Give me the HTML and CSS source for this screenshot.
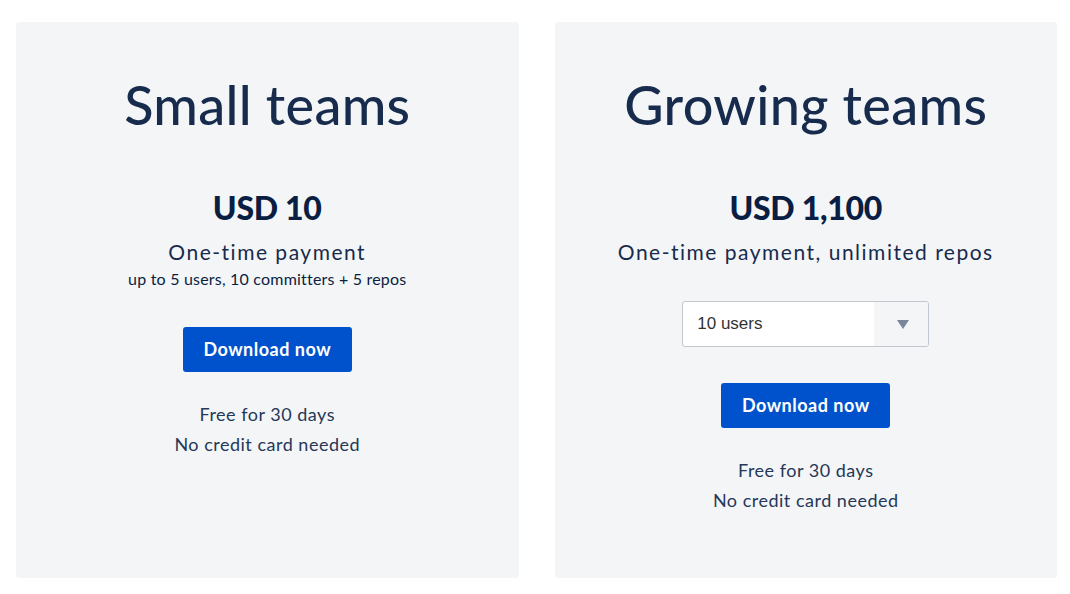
FILE: index.html
```html
<!DOCTYPE html>
<html lang="en">
<head>
    <meta charset="UTF-8">
    <meta name="viewport" content="width=device-width, initial-scale=1.0">
    <title>Pricing</title>
    <link rel="stylesheet" href="styles.css">
</head>
<body>
    <div class="plans">
        <div class="plan">
            <h2 class="plan-title">Small teams</h2>
            <p class="plan-price">USD 10</p>
            <p class="plan-type">One-time payment</p>
            <p class="plan-note">up to 5 users, 10 committers + 5 repos</p>
            <a href="#" class="btn">Download now</a>
            <div class="plan-trial">
                <p>Free for 30 days</p>
                <p>No credit card needed</p>
            </div>
        </div>
        <div class="plan">
            <h2 class="plan-title">Growing teams</h2>
            <p class="plan-price">USD 1,100</p>
            <p class="plan-type">One-time payment, unlimited repos</p>
            <div class="select-box">
                <span class="select-value">10 users</span>
                <span class="select-arrow"><span class="triangle"></span></span>
            </div>
            <a href="#" class="btn">Download now</a>
            <div class="plan-trial">
                <p>Free for 30 days</p>
                <p>No credit card needed</p>
            </div>
        </div>
    </div>
</body>
</html>
```

FILE: styles.css
```css
body {
    font-family: Lato, "Noto Sans", sans-serif;
    margin: 0;
    padding: 0;
    background-color: #fff;
    color: #172b4d;
}
p {
    margin: 0;
}
.plans {
    display: flex;
    gap: 36px;
    padding: 22px 13px 0 16px;
}
.plan {
    flex: 1;
    height: 556px;
    background: #f4f5f7;
    border-radius: 3px;
    display: flex;
    flex-direction: column;
    align-items: center;
    text-align: center;
    padding-top: 53px;
    box-sizing: border-box;
}
.plan-title {
    margin: 0;
    font-size: 54px;
    line-height: 60px;
    font-weight: 500;
    color: #172b4d;
    letter-spacing: 0.3px;
}
.plan-price {
    margin-top: 53px;
    font-size: 32px;
    line-height: 40px;
    font-weight: 900;
    color: #091e42;
    letter-spacing: -0.3px;
}
.plan-type {
    margin-top: 10px;
    font-size: 21px;
    line-height: 28px;
    letter-spacing: 1.5px;
}
.plan-note {
    margin-top: 3px;
    margin-bottom: 2px;
    font-size: 16px;
    line-height: 20px;
    letter-spacing: 0.2px;
    color: #091e42;
}
.btn {
    display: block;
    margin-top: 36px;
    width: 169px;
    height: 45px;
    line-height: 45px;
    box-sizing: border-box;
    background: #0052cc;
    color: #fff;
    text-decoration: none;
    font-weight: 700;
    font-size: 18px;
    letter-spacing: 0.5px;
    border-radius: 3px;
}
.plan-trial {
    margin-top: 27px;
    font-size: 18px;
    line-height: 30px;
    letter-spacing: 0.5px;
    color: #253858;
}
.select-box {
    margin-top: 35px;
    width: 247px;
    height: 46px;
    box-sizing: border-box;
    border: 1px solid #c1c7d0;
    border-radius: 3px;
    background: #fff;
    display: flex;
    overflow: hidden;
}
.select-value {
    flex: 1;
    text-align: left;
    padding-left: 14px;
    line-height: 44px;
    font-family: "Liberation Sans", Arial, sans-serif;
    font-size: 17px;
    color: #333;
}
.select-arrow {
    width: 54px;
    background: #f4f5f7;
    display: flex;
    align-items: center;
    justify-content: center;
}
.triangle {
    width: 0;
    height: 0;
    border-left: 6px solid transparent;
    border-right: 6px solid transparent;
    border-top: 9px solid #7a869a;
    margin-left: 3px;
}
```
